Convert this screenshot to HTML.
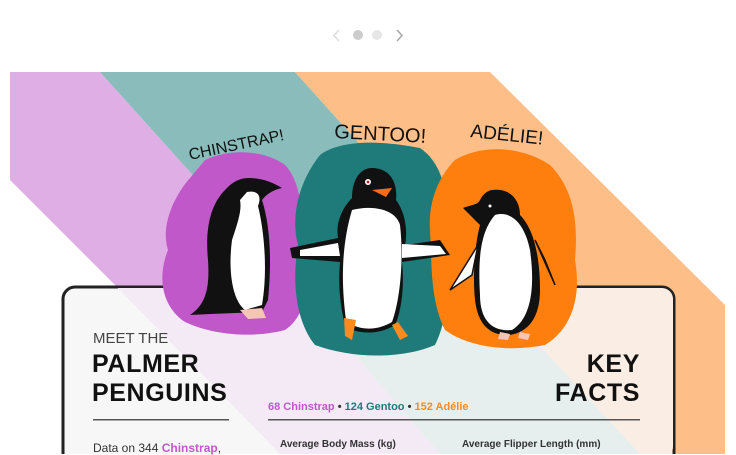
<!DOCTYPE html>
<html><head><meta charset="utf-8"><style>
html,body{margin:0;padding:0;width:736px;height:454px;overflow:hidden;background:#fff;font-family:"Liberation Sans",sans-serif}
svg{position:absolute;left:0;top:0}
.t{position:absolute;white-space:nowrap}
</style></head><body>
<svg width="736" height="454" viewBox="0 0 736 454">
<defs>
<clipPath id="card"><rect x="64" y="288" width="609" height="170" rx="11"/></clipPath>
</defs>
<!-- stripes -->
<polygon points="10,72 100,72 353,353 284,454 10,180" fill="#dfaee4"/>
<polygon points="100,72 295,72 548,353 353,353" fill="#8abcbb"/>
<polygon points="295,72 490,72 725,305 725,454 640,454 548,353" fill="#fdbe87"/>
<!-- card -->
<rect x="63" y="287" width="611" height="180" rx="12" fill="#f7f7f7" stroke="#222" stroke-width="3"/>
<g clip-path="url(#card)">
<polygon points="110,280 282,270 440,454 280,454" fill="#f3eaf5"/>
<polygon points="282,270 470,270 640,454 440,454" fill="#e7efee"/>
<polygon points="470,270 700,270 700,454 640,454" fill="#faede3"/>
</g>
<!-- blobs -->
<path d="M205,160 C230,148 265,150 285,165 C300,180 305,215 300,250 C310,280 308,315 285,330 C255,338 215,336 185,322 C160,305 158,275 168,250 C160,225 175,195 190,178 Z" fill="#c158c9"/>
<path d="M320,155 C340,140 380,140 420,148 C445,165 450,200 445,240 C450,280 448,320 435,345 C400,360 350,358 315,345 C295,320 292,280 298,245 C290,215 300,180 320,155 Z" fill="#1e7b7a"/>
<path d="M455,160 C480,145 520,145 550,165 C575,190 578,225 575,260 C582,300 570,330 545,345 C510,352 470,348 445,330 C430,300 432,265 430,230 C428,200 440,175 455,160 Z" fill="#ff7f0e"/>
<!-- chinstrap -->
<path d="M248,178 C262,178 272,182 282,188 C272,190 266,195 262,200 C270,225 272,260 268,300 L262,312 L210,314 L190,315 C205,305 210,290 208,260 C205,230 210,205 225,190 C232,182 240,178 248,178 Z" fill="#111"/>
<path d="M247,192 C258,190 262,196 258,206 C264,230 268,270 262,305 L245,310 C232,300 228,270 232,240 C238,222 242,210 240,200 Z" fill="#fff"/>
<path d="M240,310 L262,308 L266,318 L248,319 Z" fill="#f5c6b6"/>
<!-- gentoo -->
<path d="M372,168 C388,168 398,180 396,200 C405,212 408,230 405,245 L440,240 L450,255 L402,262 C405,290 400,315 395,325 C380,335 355,335 345,325 C340,305 338,285 340,262 L292,258 L290,248 L338,238 C335,220 345,205 352,198 C352,180 360,168 372,168 Z" fill="#111"/>
<path d="M352,210 C370,205 395,208 400,225 C404,260 400,300 392,322 C375,332 355,330 346,320 C342,290 340,250 352,210 Z" fill="#fff"/>
<path d="M300,250 L338,243 L340,256 L300,256 Z M402,244 L440,246 L446,254 L402,258 Z" fill="#fff"/>
<path d="M372,190 L392,188 L386,197 Z" fill="#ff6a1a"/>
<circle cx="368" cy="182" r="3" fill="#fff"/><circle cx="368" cy="182" r="1.4" fill="#b22"/>
<path d="M344,318 L356,320 L352,340 L345,336 Z M392,325 L400,340 L408,336 L398,322 Z" fill="#ff8a1e"/>
<!-- adelie -->
<path d="M493,190 C510,188 520,200 520,215 C535,230 540,260 540,290 C540,318 528,332 510,335 C490,336 478,325 475,300 C472,270 476,240 480,225 C470,215 465,210 463,208 C470,205 478,205 480,200 C483,194 488,190 493,190 Z" fill="#111"/>
<path d="M495,215 C512,210 525,225 530,250 C535,285 532,318 512,330 C492,332 480,320 480,295 C478,260 480,232 495,215 Z" fill="#fff"/>
<path d="M478,245 L450,290 L472,275 Z" fill="#fff" stroke="#111" stroke-width="1.5"/>
<path d="M535,240 L555,285 L545,260 Z" fill="#fff" stroke="#111" stroke-width="1.5"/>
<circle cx="490" cy="206" r="1.5" fill="#fff"/>
<path d="M500,332 L510,334 L508,340 L498,339 Z M520,332 L530,334 L528,340 L518,338 Z" fill="#f5c6b6"/>
<!-- lines -->
<rect x="93" y="419" width="136" height="1.5" fill="#555"/>
<rect x="268" y="419" width="372" height="1.5" fill="#555"/>
<!-- pagination -->
<path d="M339,30 L334,35.5 L339,41" fill="none" stroke="#ddd" stroke-width="1.6"/>
<circle cx="358" cy="35" r="5" fill="#ccc"/>
<circle cx="377" cy="35" r="5" fill="#e6e6e6"/>
<path d="M397,30 L402,35.5 L397,41" fill="none" stroke="#aaa" stroke-width="1.6"/>
<!-- labels -->
<text x="190" y="160" transform="rotate(-12 190 160)" font-family="Liberation Sans Narrow, Liberation Sans" font-size="16" fill="#111">CHINSTRAP!</text>
<text x="334" y="138" transform="rotate(3 334 138)" font-family="Liberation Sans Narrow, Liberation Sans" font-size="20" fill="#111">GENTOO!</text>
<text x="470" y="137" transform="rotate(6 470 137)" font-family="Liberation Sans Narrow, Liberation Sans" font-size="19" fill="#111">ADÉLIE!</text>
</svg>
<div class="t" style="left:93px;top:330px;font-size:15px;color:#444;">MEET THE</div>
<div class="t" style="left:92px;top:350px;font-size:25px;font-weight:900;color:#111;line-height:29px;letter-spacing:0.6px">PALMER<br>PENGUINS</div>
<div class="t" style="right:96px;top:350px;font-size:25px;font-weight:900;color:#111;line-height:29px;text-align:right;letter-spacing:0.6px">KEY<br>FACTS</div>
<div class="t" style="left:268px;top:401px;font-size:11px;font-weight:bold;color:#1e7b7a"><span style="color:#c158c9">68 Chinstrap</span> <span style="color:#333">•</span> 124 Gentoo <span style="color:#333">•</span> <span style="color:#ff8a1e">152 Adélie</span></div>
<div class="t" style="left:93px;top:441px;font-size:12px;color:#333">Data on 344 <b style="color:#c158c9">Chinstrap</b>,</div>
<div class="t" style="left:280px;top:439px;font-size:10px;font-weight:bold;color:#333">Average Body Mass (kg)</div>
<div class="t" style="left:462px;top:439px;font-size:10px;font-weight:bold;color:#333">Average Flipper Length (mm)</div>
</body></html>
